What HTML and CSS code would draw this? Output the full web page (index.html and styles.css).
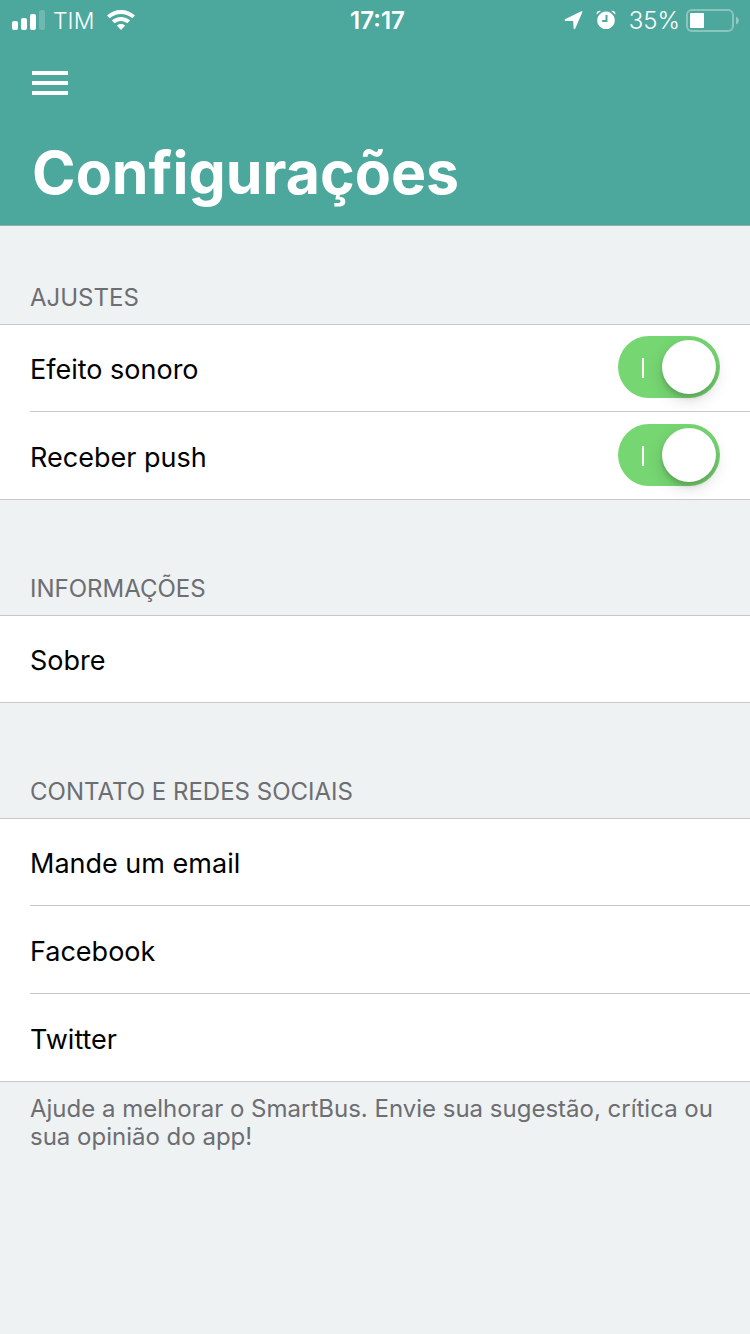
FILE: index.html
```html
<!DOCTYPE html>
<html lang="pt-BR">
<head>
<meta charset="utf-8">
<meta name="viewport" content="width=device-width, initial-scale=1">
<title>Configurações</title>
<link rel="stylesheet" href="styles.css">
</head>
<body>
<header class="header">
  <div class="status">
    <div class="status-left">
      <svg class="signal" width="33" height="20" viewBox="0 0 33 20" aria-hidden="true">
        <rect x="0" y="11" width="6" height="9" rx="2"/>
        <rect x="9" y="8" width="6" height="12" rx="2"/>
        <rect x="18" y="4" width="6" height="16" rx="2"/>
        <rect x="27" y="0" width="6" height="20" rx="2" opacity=".2"/>
      </svg>
      <span class="carrier">TIM</span>
      <svg class="wifi" width="28" height="20" viewBox="0 0 28 20" aria-hidden="true">
        <path d="M14 0C8.600 0 3.700 2 0 5.500L2.700 8.300C5.700 5.500 9.600 3.900 14 3.900S22.300 5.500 25.300 8.300L28 5.500C24.300 2 19.400 0 14 0Z"/>
        <path d="M14 7C10.500 7 7.300 8.300 4.900 10.500L7.600 13.300C9.300 11.800 11.500 10.900 14 10.900S18.700 11.800 20.400 13.300L23.100 10.500C20.700 8.300 17.500 7 14 7Z"/>
        <path d="M14 14C12.200 14 10.900 14.600 9.800 15.600L14 20L18.200 15.600C17.100 14.600 15.800 14 14 14Z"/>
      </svg>
    </div>
    <time class="clock">17:17</time>
    <div class="status-right">
      <svg width="20" height="19" viewBox="0 0 20 19" aria-hidden="true">
        <path d="M17.300.2Q18.800 0 18.300 1.300L11.300 17.600Q10.100 18.900 9.600 17.300L9.200 10H1.600Q-.2 9.300 1 8.200Z"/>
      </svg>
      <svg class="alarm" width="20" height="20" viewBox="0 0 20 20" aria-hidden="true">
        <path fill-rule="evenodd" d="M10 1.500a8.800 8.800 0 1 0 .01 0ZM9.500 5h2v7H6.200v-2h3.300Z"/>
        <path d="M.5 4.500C.4 2 1.900.3 4.900.9ZM19.500 4.500C19.600 2 18.100.3 15.100.9Z"/>
      </svg>
      <span class="percent">35%</span>
      <svg class="battery" width="53" height="23" viewBox="0 0 53 23" aria-hidden="true">
        <rect x="1" y="1" width="46" height="21" rx="5" fill="none" stroke="#fff" stroke-width="2" opacity=".35"/>
        <rect x="4" y="4" width="14" height="15" rx="1"/>
        <path d="M50 7.500Q53 9 53 11.500T50 15.500Z" opacity=".4"/>
      </svg>
    </div>
  </div>
  <button class="menu" type="button" aria-label="Menu">
    <svg width="36" height="24" viewBox="0 0 36 24" aria-hidden="true">
      <path d="M0 0h36v4H0zM0 10h36v4H0zM0 20h36v4H0z"/>
    </svg>
  </button>
  <h1 class="title">Configurações</h1>
</header>
<main>
  <section class="group">
    <h2 class="group-title">Ajustes</h2>
    <ul class="list">
      <li class="row">
        <label class="row-label" for="sound">Efeito sonoro</label>
        <input class="switch" id="sound" type="checkbox" role="switch" checked>
      </li>
      <li class="row">
        <label class="row-label" for="push">Receber push</label>
        <input class="switch" id="push" type="checkbox" role="switch" checked>
      </li>
    </ul>
  </section>
  <section class="group">
    <h2 class="group-title">Informações</h2>
    <ul class="list">
      <li class="row"><a class="row-label" href="#sobre">Sobre</a></li>
    </ul>
  </section>
  <section class="group">
    <h2 class="group-title">Contato e redes sociais</h2>
    <ul class="list">
      <li class="row"><a class="row-label" href="#email">Mande um email</a></li>
      <li class="row"><a class="row-label" href="#facebook">Facebook</a></li>
      <li class="row"><a class="row-label" href="#twitter">Twitter</a></li>
    </ul>
    <p class="note">Ajude a melhorar o SmartBus. Envie sua sugestão, crítica ou sua opinião do app!</p>
  </section>
</main>
</body>
</html>
```
FILE: styles.css
```css
* {
  box-sizing: border-box;
}

body {
  margin: 0;
  background: #eef2f3;
  color: #000;
  font-family: Inter, "Liberation Sans", sans-serif;
}

.header {
  padding-bottom: 16px;
  border-bottom: 1px solid #94aeac;
  background: #4ca79c;
  color: #fff;
}

.header svg {
  display: block;
  fill: currentColor;
}

.status {
  display: grid;
  grid-template-columns: 1fr auto 1fr;
  align-items: center;
  height: 40px;
  padding: 0 11px 0 12px;
  font-size: 24px;
  line-height: 40px;
}

.status-left,
.status-right {
  display: flex;
  align-items: center;
}

.status-left {
  gap: 8px;
  font-size: 23px;
}

.wifi {
  margin-left: 5px;
}

.status-right {
  justify-content: flex-end;
}

.carrier,
.percent,
.clock {
  padding-top: 2px;
  line-height: 38px;
}

.carrier,
.percent {
  font-weight: 300;
}

.clock {
  padding-left: 4px;
  font-weight: 600;
}

.alarm {
  margin: 0 13px 0 12px;
}

.battery {
  margin-left: 6px;
}

.menu {
  display: block;
  margin: 21px 22px 0;
  padding: 10px;
  border: 0;
  background: none;
  color: inherit;
}

.title {
  margin: 0;
  padding: 32px 32px 0;
  font-size: 59px;
  font-weight: 700;
  line-height: 72px;
}

.group-title {
  margin: 0;
  padding: 75px 30px 12px;
  color: #6d6d72;
  font-size: 24px;
  font-weight: 400;
  line-height: 28px;
  text-transform: uppercase;
}

.group:first-child .group-title {
  padding-top: 58px;
}

.list {
  margin: 0;
  padding: 0 0 0 30px;
  border: solid #c8c7cc;
  border-width: 1px 0;
  background: #fff;
  list-style: none;
}

.row {
  display: flex;
  align-items: center;
  min-height: 86px;
  padding-right: 30px;
}

.row + .row {
  min-height: 88px;
  border-top: 1px solid #c8c7cc;
}

.row-label {
  flex: 1;
  padding: 28px 0 24px;
  color: inherit;
  font-size: 27px;
  line-height: 34px;
  text-decoration: none;
}

.switch {
  appearance: none;
  display: flex;
  align-items: center;
  justify-content: space-between;
  width: 102px;
  height: 62px;
  margin: 0 0 2px;
  padding: 0 4px 0 24px;
  border-radius: 31px;
  background: #76d672;
}

.switch::before {
  content: "";
  width: 2px;
  height: 20px;
  margin-top: 2px;
  background: #fff;
}

.switch::after {
  content: "";
  width: 54px;
  height: 54px;
  border-radius: 50%;
  background: #fff;
  box-shadow: 0 6px 16px rgb(0 0 0 / 15%), 0 4px 4px rgb(0 0 0 / 12%);
}

.switch:not(:checked) {
  flex-direction: row-reverse;
  padding: 0 24px 0 4px;
  background: #d8d8dc;
}

.note {
  margin: 0;
  padding: 13px 30px;
  color: #6d6d72;
  font-size: 24px;
  line-height: 28px;
}
```
